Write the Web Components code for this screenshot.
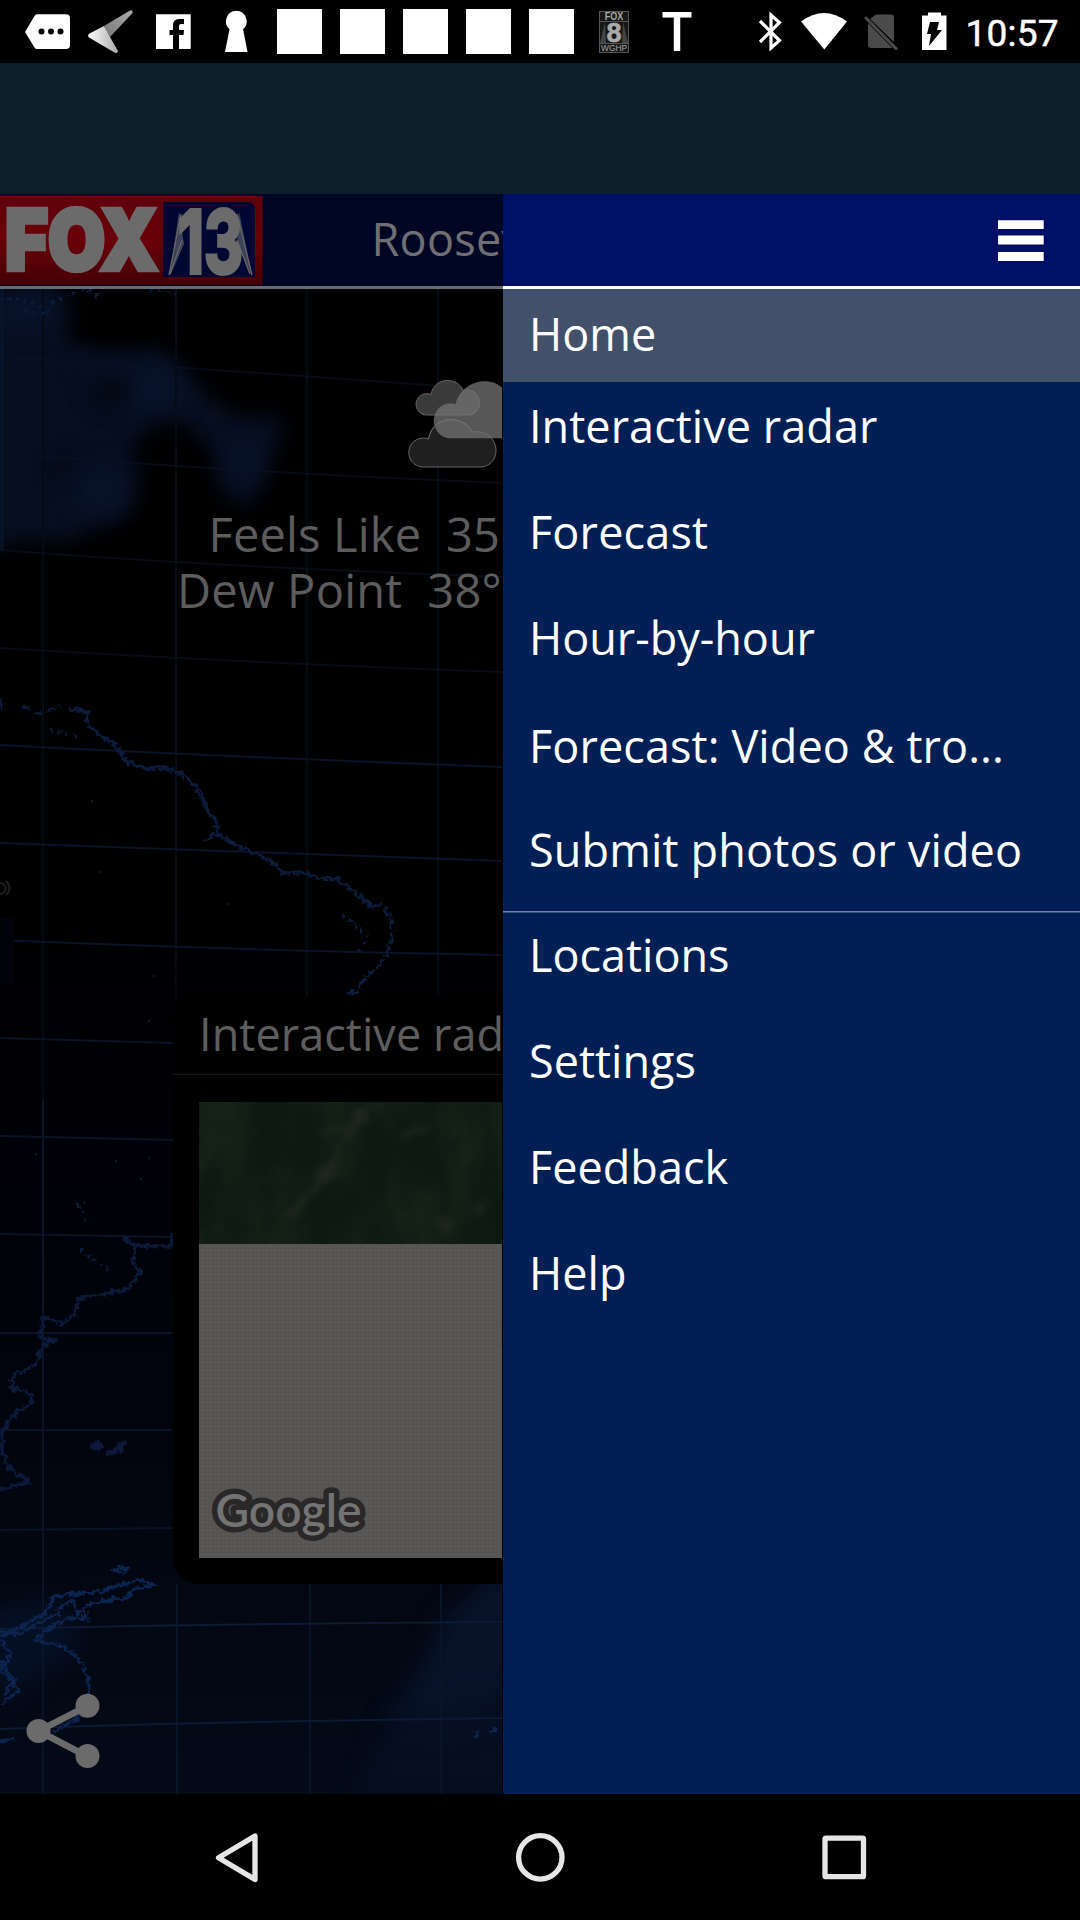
<!DOCTYPE html>
<html lang="en">
<head>
<meta charset="utf-8">
<title>Weather</title>
<style>
html,body{margin:0;padding:0;background:#000}
body{width:1080px;height:1920px;overflow:hidden;font-family:"Open Sans","Noto Sans",sans-serif}
</style>
</head>
<body>
<weather-app></weather-app>
<script>
const define = (name, html, init) => {
  const tpl = document.createElement('template');
  tpl.innerHTML = html;
  customElements.define(name, class extends HTMLElement {
    connectedCallback() {
      if (this.shadowRoot) return;
      this.attachShadow({mode: 'open'}).appendChild(tpl.content.cloneNode(true));
      if (init) init(this);
    }
  });
};

/* A line of text whose inked width is tuned with letter spacing */
const ruler = document.createElement('canvas').getContext('2d');
define('fit-text', `<style>:host{display:block;white-space:pre}</style><slot></slot>`, el => {
  const cs = getComputedStyle(el), t = el.textContent;
  ruler.font = `${cs.fontWeight} ${cs.fontSize} ${cs.fontFamily}`;
  const m = ruler.measureText(t);
  const ink = m.actualBoundingBoxLeft + m.actualBoundingBoxRight;
  el.style.marginLeft = m.actualBoundingBoxLeft + 'px';
  el.style.letterSpacing = ((+el.getAttribute('ink') - ink) / (t.length - 1)) + 'px';
});

define('status-bar', `<style>:host{display:block;height:63px;background:#000}svg{display:block}</style>
<svg width="1080" height="63" viewBox="0 0 1080 63">
  <defs><linearGradient id="a" x1="0" x2="1" y1="1" y2="0"><stop offset="0" stop-color="#777"/><stop offset="1" stop-color="#aaa"/></linearGradient>
  <linearGradient id="b" x1="0" x2="1"><stop offset="0" stop-color="#fff"/><stop offset="1" stop-color="#aaa"/></linearGradient></defs>
  <path fill="#fff" d="M37 14.3H66q4 0 4 4V45q0 4-4 4H37q-1.500 0-2.500-1.500L25 32l9.500-16Q35.500 14.300 37 14.300Z"/>
  <g fill="#000"><circle cx="41.500" cy="31.500" r="3"/><circle cx="51" cy="31.500" r="3"/><circle cx="60.500" cy="31.500" r="3"/></g>
  <path fill="url(#a)" d="M104 26 130 10.500Q133 9.500 132.500 13L110 37Z"/>
  <path fill="url(#b)" d="M104 26 110 37 118 51Q117.500 54 114.500 52.500L89 37.500Q87 35.500 89.500 33.500Z"/>
  <path fill="#fff" d="M156 14.300h34.700V49H179V35h4.500l.5-5H179v-4q0-2 2-2h3v-5h-5q-6 0-6 6.500V30h-3.500v5h3.500v14H156Z"/>
  <path fill="#fff" d="M236.300 10.700a10.600 10.600 0 0 1 6.800 18.500L247.500 52H225l4.500-22.800a10.600 10.600 0 0 1 6.800-18.500Z"/>
  <path fill="#fff" d="M277 9h45v45h-45zM340 9h45v45h-45zM403 9h45v45h-45zM466 9h45v45h-45zM529 9h45v45h-45z"/>
  <g font-family="Liberation Sans" font-weight="700" text-anchor="middle">
   <rect x="599.500" y="11.500" width="29" height="41" fill="#171717" stroke="#555"/>
   <path d="M605 22 600 43h6zM623 22l5 21h-6z" fill="#444"/><path d="M600 21.500h28M600 43.500h28" stroke="#555"/>
   <text x="614" y="19.800" font-size="10.500" fill="#aaa" textLength="18.500" lengthAdjust="spacingAndGlyphs">FOX</text>
   <text x="614" y="42" font-size="27" fill="#aaa" stroke="#aaa" stroke-width=".6">8</text>
   <text x="614" y="51.300" font-size="9.500" font-weight="400" fill="#aaa" textLength="26" lengthAdjust="spacingAndGlyphs">WGHP</text>
  </g>
  <text x="677" y="51" text-anchor="middle" font-family="Open Sans" font-size="54" font-weight="600" fill="#fff">T</text>
  <path fill="none" stroke="#fff" stroke-width="3.200" d="M760 21 779.500 40.500 771 48V15l8.500 7.500L760 42"/>
  <path fill="#fff" d="M801 21.500Q824 4.500 847 21.500L824.300 49.500Z"/>
  <path fill="#4b4b4b" d="M876 14.500h15q3 0 3 3V42L870 19ZM868 23 892.500 48H871q-3 0-3-3Z"/><path d="m865 17 32 32.500" stroke="#4b4b4b" stroke-width="3"/>
  <path fill="#fff" d="M928 15.500V12.500h13v3h5.500V50H922V15.500Z"/><path d="M930 22h9l-2 8h5L929 46l2-12h-4Z"/>
  <text x="965.500" y="46" font-family="Roboto" font-size="37" fill="#fff" stroke="#fff" stroke-width=".5" textLength="93">10:57</text>
</svg>`);

define('ad-band', `<style>:host{display:block;height:131px;background:#0c1f2b}</style>`);

define('station-logo', `<style>:host{display:block;width:263px;height:92px}svg{display:block}</style>
<svg width="263" height="92" viewBox="0 194 263 92">
 <defs><linearGradient id="r" x2="0" y2="1"><stop offset="0" stop-color="#5f000a"/><stop offset=".5" stop-color="#690008"/><stop offset="1" stop-color="#430004"/></linearGradient></defs>
 <path fill="#000624" d="M0 194h263v92H0z"/><path fill="url(#r)" d="M0 196h262.500v89H0z"/>
 <path fill="#000733" d="M163 202h84q8 0 8 8v67h-92Z"/>
 <g fill="#3c4257"><path d="m179 211-9 65 14-32z"/><path d="m239 211 13 65-15-32z"/></g>
 <path d="m181 214-12 61M237 214l15 61M182 240l-12 34M237 240l13 34" stroke="#666" stroke-width="1.300" fill="none"/>
 <g fill="#6b6b6b" stroke="#6b6b6b" font-family="Inter,Open Sans" font-weight="900">
 <text x="5" y="270" font-size="84" stroke-width="4.500" textLength="153" lengthAdjust="spacingAndGlyphs">FOX</text>
 <text x="178" y="272.500" font-size="87" font-weight="700" stroke-width="4" textLength="65" lengthAdjust="spacingAndGlyphs">13</text></g>
</svg>`);

define('world-map', `<style>:host{display:block}svg{display:block}filter{color-interpolation-filters:sRGB}</style>
<svg width="502" height="1600" viewBox="0 194 502 1600">
 <defs>
  <linearGradient id="g" x2="0" y2="1"><stop offset="0" stop-color="#000002"/><stop offset=".45" stop-color="#000001"/><stop offset=".65" stop-color="#010209"/><stop offset="1" stop-color="#040a18"/></linearGradient>
  <filter id="s" x="-20%" y="-20%" width="140%" height="140%"><feTurbulence type="fractalNoise" baseFrequency=".022" numOctaves="3" seed="4"/><feDisplacementMap in="SourceGraphic" scale="30" xChannelSelector="R" yChannelSelector="G"/><feGaussianBlur stdDeviation="9"/></filter>
  <filter id="soft" x="-30%" y="-30%" width="160%" height="160%"><feGaussianBlur stdDeviation="12"/></filter>
  <filter id="c" x="-10%" y="-10%" width="120%" height="120%"><feTurbulence type="fractalNoise" baseFrequency=".2" numOctaves="2" seed="8"/><feDisplacementMap in="SourceGraphic" scale="9" xChannelSelector="R" yChannelSelector="G"/><feGaussianBlur stdDeviation=".6"/></filter>
 </defs>
 <path fill="url(#g)" d="M0 194h503v1600H0z"/>
 <path filter="url(#s)" fill="#060e20" d="M-30 290 55 285 72 340 100 342 160 350 200 385 235 420 275 415 280 430 268 470 250 505 228 500 215 450 190 425 150 430 135 455 145 485 110 525 50 540-30 550Z"/>
 <path filter="url(#soft)" fill="#0b1733" opacity=".55" d="M0 289 50 295 55 325 0 335zM80 360 170 365 190 400 140 420 90 390zM70 470 125 470 125 505 80 510zM225 445h38l-5 30h-30z"/>
 <path filter="url(#soft)" fill="#000103" opacity=".8" d="M95 376h32v28H95zM146 430l26-8 20 30-40 20zM48 468l24-14-6 22z"/>
 <path filter="url(#soft)" fill="#08132a" d="M530 1540 445 1620 425 1665 390 1718 440 1735 530 1700Z"/>
 <path filter="url(#soft)" fill="#070f23" opacity=".8" d="M530 1690 390 1715 355 1800H530Z"/>
 <path filter="url(#soft)" fill="#081632" d="M-20 1610 60 1600 80 1650 0 1700Z" opacity=".55"/>
 <g fill="none" stroke-width="2">
  <path stroke="#050b14" d="M43 289V1100M176 289V1000M307 289V995M438 289V995"/>
  <path stroke="#091426" d="M43 1100V1794M177 1584V1794M310 1584V1794M441 1584V1794"/>
  <path stroke="#0a1225" opacity=".6" d="M0 357Q170 366 440 386M0 453Q230 472 503 483M0 550Q200 566 503 577M0 648Q230 662 503 672"/>
  <path stroke="#091226" d="M0 745Q230 757 503 767M0 843Q230 852 503 861M0 940Q230 950 503 955M0 1038 173 1043M0 1136 173 1140M0 1234 173 1237M0 1333H173M0 1430H173M0 1530 173 1528"/>
  <path stroke="#0d1a35" d="M0 1629Q200 1624 503 1622M0 1729Q200 1722 503 1718"/>
  <path stroke="#08142a" stroke-width="3" d="M2 289V550"/>
 </g>
 <g fill="none" stroke="#0b1a3a" stroke-width="3.500" stroke-linejoin="round" filter="url(#c)">
  <path stroke-dasharray="9 4" d="M0 700 4 710M22 706 38 713 60 707"/><path d="M68 709 88 712 86 722 98 734 116 746 126 761 137 766 148 769 164 768 182 774 198 788 205 803 208 812 217 823 217 833 205 841M217 833 228 840 239 848 248 850 265 858 278 866 281 873 305 873 320 878 336 879 350 889 371 906"/>
  <path stroke-dasharray="11 3" d="M371 906 385 906 392 925 391 945 383 962 365 978 356 991 345 995"/>
  <path d="M122 1237 135 1245 133 1263 141 1272 128 1289 105 1294 78 1299 75 1315 63 1323 43 1318 41 1338 55 1340 44 1344 35 1366 12 1376 12 1388 32 1395 31 1404 17 1412 2 1430 2 1450 9 1468 30 1482 0 1490M135 1245 170 1247 173 1235"/>
  <path stroke-width="5" d="M92 1450 96 1443 101 1450M106 1452 112 1453 125 1443 119 1452"/>
 </g>
 <g fill="none" stroke="#0c2450" stroke-width="3" filter="url(#c)">
  <path d="M0 1637 28 1623 45 1613 55 1596 75 1594 97 1592 120 1585 140 1580 155 1585 135 1589 126 1598 95 1602 82 1609 88 1618 66 1619 45 1631 36 1640 60 1646 75 1655 84 1668 89 1680 89 1696M0 1640 12 1655 0 1668 19 1690 0 1705M0 1660 14 1680 4 1695M115 1570l6-4 6 3-5 4ZM55 1610 72 1601 80 1615M0 1632 20 1634 40 1622 62 1612"/><path d="m89 1713-30 15-5 5M0 1740h14M475 1735l5-3M491 1732l5-4"/>
 </g>
 <g fill="none" stroke="#0c1d3f" stroke-width="3" stroke-dasharray="3 5" filter="url(#c)"><path d="M0 300Q30 295 50 315M25 310Q45 320 55 300L85 289 100 296M150 290l30 3M50 730l30 7M342 915l25 20-10 20M80 1250l30 20M78 1205l10 20"/></g>
 <g fill="#101822"><path d="M91 800h2v2h-2zM99 871h2v2h-2zM227 903h2v2h-2zM153 975h2v2h-2zM148 1020h2v2h-2zM35 1153h2v2h-2zM115 1160h2v2h-2zM148 1157h2v2h-2zM83 1202h2v2h-2zM140 1178h2v2h-2z"/></g>
 <path d="M0 883a5.500 5.500 0 0 1 0 11M6 881q7 7 0 14" fill="none" stroke="#1c1c1c" stroke-width="2"/>
 <path fill="#02030a" d="M0 918h14v65H0z"/>
</svg>`);

define('cloud-icon', `<style>:host{display:block;width:96px;height:90px}svg{display:block}</style>
<svg width="96" height="90" viewBox="406.500 378.500 96 90" stroke="#666" stroke-width="1">
 <path fill="#3a3a3a" d="M428 414.500a10.700 10.700 0 1 1 3.500-20.500c3-18 27-18 32-4 12-3 17 7 16.500 13.500-.5 7-6 11-11 11Z"/>
 <path fill="#1f1f1f" d="M423 466.500a14.500 14.500 0 1 1 6-28c4-24 34-25 44-7 14-2 24 7 23.500 19.500-.5 9-7 15.500-16 15.500Z"/>
 <path fill="#747474" fill-opacity=".75" stroke="none" d="M449 437.700a16.500 17.500 0 1 1 7-34c6-24 35-29 47-16v50Z"/>
 <path fill="none" stroke="#777" d="M429 438.500c4-24 34-25 44-7" opacity=".5"/>
</svg>`);

define('radar-card', `<style>
:host{display:flex;flex-direction:column;width:329px;height:589px;background:#000;border-radius:26px 0 0 26px;box-sizing:border-box}
header{height:80px;box-sizing:border-box;padding:8px 0 0 30px;font-size:45px;line-height:61px;color:#5d5d5d;border-bottom:1px solid #171717}
svg{display:block;margin:27px 0 0 26px}
filter{color-interpolation-filters:sRGB}
</style>
<header><fit-text ink="297.500">Interactive rad</fit-text></header>
<svg width="303" height="456" viewBox="199 1102 303 456">
 <defs><filter id="t" x="0" y="0" width="100%" height="100%"><feTurbulence type="fractalNoise" baseFrequency=".02 .011" numOctaves="5" seed="12"/><feColorMatrix values="0 0 0 0 .14  0 0 0 0 .17  0 0 0 0 .13  1.8 0 0 0 -.6"/></filter>
 <filter id="bl" x="-30%" y="-30%" width="160%" height="160%"><feTurbulence type="fractalNoise" baseFrequency=".06" numOctaves="3" seed="3"/><feDisplacementMap in="SourceGraphic" scale="26" xChannelSelector="R" yChannelSelector="G"/><feGaussianBlur stdDeviation="3.500"/></filter>
 <pattern id="p" width="4" height="4" patternUnits="userSpaceOnUse"><path d="M0 0h4v4H0z" fill="#5a5856"/><path d="M0 .5h4M.5 0v4" stroke="#555351"/></pattern></defs>
 <path fill="#0d1a11" d="M199 1102h304v142H199z"/>
 <rect x="199" y="1102" width="304" height="142" filter="url(#t)" opacity=".6"/>
 <g filter="url(#bl)" stroke="#242c24" stroke-width="7" fill="none" opacity=".75"><path d="m290 1222 20-30 20-22 25-50M400 1135l30-12M440 1240l8-22M480 1212l10-10M330 1130l50-20"/></g>
 <path fill="url(#p)" d="M199 1244h304v314H199z"/>
 <path d="M503 1315q-4 20 0 40z" fill="#4b4947"/>
 <text x="215.500" y="1527" font-family="Lato" font-weight="600" font-size="46" textLength="146" lengthAdjust="spacingAndGlyphs" fill="#737373" stroke="#292727" stroke-width="11" stroke-linejoin="round" paint-order="stroke">Google</text>
</svg>`);

define('share-icon', `<style>:host{display:block;width:76px;height:76px}svg{display:block}</style>
<svg width="76" height="76" viewBox="25 1693 76 76"><path d="m87.500 1706-49 25 49 25.500" fill="none" stroke="#6b6b6b" stroke-width="6.500"/><g fill="#6b6b6b"><circle cx="38.500" cy="1731" r="12"/><circle cx="87.500" cy="1705.800" r="12"/><circle cx="87.500" cy="1756" r="12"/></g></svg>`);

define('home-page', `<style>
:host{display:grid;width:502.500px;height:1600px;overflow:hidden}
world-map,.page{grid-area:1/1}
.page{display:flex;flex-direction:column;width:503px;z-index:1}
header{display:flex;height:92px;background:#000624;border-bottom:3px solid #666b74;color:#6f6f73}
.city{font-size:45px;line-height:61px;padding:14px 0 0 112.500px}
cloud-icon{margin:90px 0 0 406px}
.facts{font-size:47px;line-height:56px;color:#5c5c5c;padding-top:37px}
.row{display:flex}.a{padding-left:212.500px}.b{padding-left:181px}
radar-card{margin:377px 0 0 173px}
share-icon{margin:109px 0 0 25px}
</style>
<world-map></world-map>
<div class="page">
 <header><station-logo></station-logo><div class="city"><fit-text ink="149">Roosev</fit-text></div></header>
 <cloud-icon></cloud-icon>
 <div class="facts"><div class="row a"><fit-text ink="285.500">Feels Like  35</fit-text></div><div class="row b"><fit-text ink="318.500">Dew Point  38°</fit-text></div></div>
 <radar-card></radar-card>
 <share-icon></share-icon>
</div>`);

define('menu-item', `<style>
:host{display:block;box-sizing:border-box;height:106px;padding:13px 0 0 30.500px;font-size:45px;line-height:61px;color:#fff}
:host([selected]){height:93px;padding-top:14px;background:#42506a}
:host([divided]){box-shadow:inset 0 1.500px #7285a8}
</style><slot></slot>`);

define('nav-drawer', `<style>
:host{display:block;width:577.500px;height:1600px;background:#001f54}
header{display:flex;justify-content:flex-end;height:92px;background:#000f66;border-bottom:3px solid #fff}
svg{margin:26px 36px 0 0}
</style>
<header><svg width="46" height="41" fill="#fff"><path d="M0 .3h45.700V9H0zM0 15.500h45.700v9H0zM0 32h45.700v9H0z"/></svg></header>
<slot></slot>`);

define('system-nav', `<style>:host{display:block;height:126px;background:#000}svg{display:block}</style>
<svg width="1080" height="126" viewBox="0 1794 1080 126" fill="none" stroke="#e6e6e6" stroke-width="5.300" stroke-linejoin="round">
 <path d="M255 1836v43.500L218.500 1857.700Z"/><circle cx="540.300" cy="1857.400" r="21.700"/><rect x="825" y="1838.200" width="38.500" height="38.500" rx="1"/></svg>`);

define('weather-app', `<style>:host{display:flex;flex-direction:column;width:1080px;height:1920px}main{display:flex;height:1600px}</style>
<status-bar></status-bar><ad-band></ad-band>
<main><home-page></home-page>
<nav-drawer>
 <menu-item selected><fit-text ink="121">Home</fit-text></menu-item>
 <menu-item><fit-text ink="344">Interactive radar</fit-text></menu-item>
 <menu-item><fit-text ink="174">Forecast</fit-text></menu-item>
 <menu-item style="height:108px"><fit-text ink="281.500">Hour-by-hour</fit-text></menu-item>
 <menu-item style="height:104px"><fit-text ink="468">Forecast: Video &amp; tro...</fit-text></menu-item>
 <menu-item style="height:104.500px;padding-left:28.500px;padding-top:12.500px"><fit-text ink="489">Submit photos or video</fit-text></menu-item>
 <menu-item divided><fit-text ink="195">Locations</fit-text></menu-item>
 <menu-item style="padding-left:28.500px"><fit-text ink="163.500">Settings</fit-text></menu-item>
 <menu-item><fit-text ink="195.500">Feedback</fit-text></menu-item>
 <menu-item><fit-text ink="92">Help</fit-text></menu-item>
</nav-drawer></main>
<system-nav></system-nav>`);
</script>
</body>
</html>
